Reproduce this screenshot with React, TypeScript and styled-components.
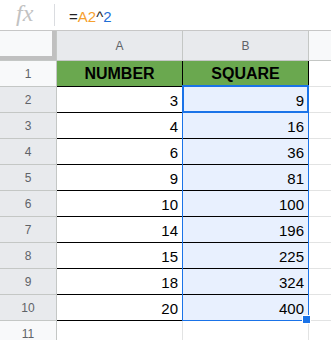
import React from "react";
import styled, { createGlobalStyle } from "styled-components";

const Global = createGlobalStyle`
  html, body { margin: 0; padding: 0; background: #ffffff; }
  body { font-family: "Liberation Sans", Arial, sans-serif; overflow: hidden; }
  * { box-sizing: border-box; }
`;

const Sheet = styled.div`
  width: 331px;
  height: 340px;
  overflow: hidden;
  background: #ffffff;
`;

const FormulaBar = styled.div`
  height: 31px;
  display: flex;
  align-items: center;
  border-bottom: 1px solid #c7c7c7;
  background: #ffffff;
`;

const Fx = styled.div`
  width: 54px;
  padding-left: 16px;
  font-family: "Liberation Serif", "DejaVu Serif", serif;
  font-style: italic;
  font-size: 24px;
  color: #c2c2c2;
  line-height: 1;
  margin-top: -4px;
`;

const Divider = styled.div`
  width: 1px;
  height: 22px;
  background: #dadce0;
`;

const Formula = styled.div`
  padding-left: 14px;
  font-size: 15px;
  color: #222222;
  margin-top: 2px;
`;

const Ref = styled.span<{ $c: string }>`
  color: ${(p) => p.$c};
`;

const Grid = styled.div`
  position: relative;
  display: flex;
  flex-direction: column;
`;

const HeaderRow = styled.div`
  display: flex;
  height: 30px;
  border-bottom: 1px solid #c4c7c5;
`;

const Row = styled.div`
  display: flex;
  height: 26px;
`;

const Corner = styled.div`
  width: 57px;
  flex: none;
  background: #f8f9fa;
  box-shadow: inset -4px -4px 0 #c0c0c0;
  border-right: 1px solid #c4c7c5;
`;

const ColHeader = styled.div<{ $shade: boolean }>`
  width: 126px;
  flex: none;
  display: flex;
  align-items: center;
  justify-content: center;
  font-size: 12px;
  color: #5f6368;
  background: ${(p) => (p.$shade ? "#e8eaed" : "#f8f9fa")};
  border-right: 1px solid #c4c7c5;
`;

const ColRest = styled.div`
  flex: 1;
  background: #f8f9fa;
`;

const RowHeader = styled.div<{ $shade: boolean }>`
  width: 57px;
  flex: none;
  display: flex;
  align-items: center;
  justify-content: center;
  font-size: 12px;
  color: #5f6368;
  background: ${(p) => (p.$shade ? "#e8eaed" : "#f8f9fa")};
  border-right: 1px solid #c4c7c5;
  border-bottom: 1px solid #c4c7c5;
`;

type CellKind = "head" | "plain" | "sel" | "empty";

const Cell = styled.div<{ $kind: CellKind }>`
  width: 126px;
  flex: none;
  display: flex;
  align-items: center;
  justify-content: ${(p) => (p.$kind === "head" ? "center" : "flex-end")};
  padding: 1px 4px 0 4px;
  font-size: ${(p) => (p.$kind === "head" ? "16px" : "15px")};
  font-weight: ${(p) => (p.$kind === "head" ? 700 : 400)};
  color: #000000;
  background: ${(p) =>
    p.$kind === "head" ? "#6aa84f" : p.$kind === "sel" ? "#e8f0fe" : "#ffffff"};
  border-right: 1px solid ${(p) => (p.$kind === "empty" ? "#e2e3e3" : "#000000")};
  border-bottom: 1px solid ${(p) => (p.$kind === "empty" ? "#e2e3e3" : "#000000")};
`;

const Rest = styled.div`
  flex: 1;
  border-bottom: 1px solid #e2e3e3;
`;

const Selection = styled.div`
  position: absolute;
  left: 182px;
  top: 55px;
  width: 127px;
  height: 235px;
  border: 1px solid #1a73e8;
  pointer-events: none;
`;

const ActiveCell = styled.div`
  position: absolute;
  left: 182px;
  top: 54px;
  width: 127px;
  height: 28px;
  border: 2px solid #1a73e8;
  pointer-events: none;
`;

const FillHandle = styled.div`
  position: absolute;
  left: 302px;
  top: 284px;
  width: 9px;
  height: 9px;
  background: #1a73e8;
  border: 1px solid #ffffff;
`;

const data: [number, number][] = [
  [3, 9],
  [4, 16],
  [6, 36],
  [9, 81],
  [10, 100],
  [14, 196],
  [15, 225],
  [18, 324],
  [20, 400],
];

export default function App() {
  return (
    <>
      <Global />
      <Sheet>
        <FormulaBar>
          <Fx>fx</Fx>
          <Divider />
          <Formula>
            =<Ref $c="#f6a02d">A2</Ref>^<Ref $c="#1f6fd6">2</Ref>
          </Formula>
        </FormulaBar>
        <Grid>
          <HeaderRow>
            <Corner />
            <ColHeader $shade>A</ColHeader>
            <ColHeader $shade>B</ColHeader>
            <ColRest />
          </HeaderRow>
          <Row>
            <RowHeader $shade={false}>1</RowHeader>
            <Cell $kind="head">NUMBER</Cell>
            <Cell $kind="head">SQUARE</Cell>
            <Rest />
          </Row>
          {data.map(([n, sq], i) => (
            <Row key={i}>
              <RowHeader $shade>{i + 2}</RowHeader>
              <Cell $kind="plain">{n}</Cell>
              <Cell $kind="sel">{sq}</Cell>
              <Rest />
            </Row>
          ))}
          <Row>
            <RowHeader $shade={false}>11</RowHeader>
            <Cell $kind="empty" />
            <Cell $kind="empty" />
            <Rest />
          </Row>
          <Selection />
          <ActiveCell />
          <FillHandle />
        </Grid>
      </Sheet>
    </>
  );
}
